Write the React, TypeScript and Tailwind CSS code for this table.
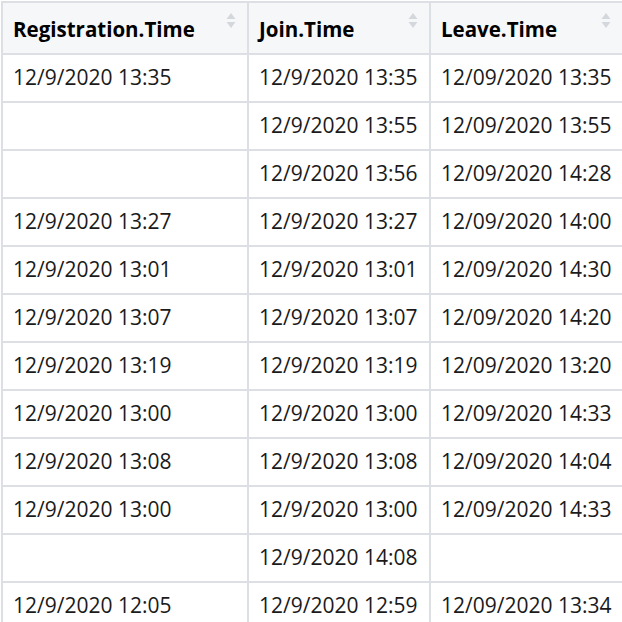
import React from 'react';

type Row = [string, string, string];

const rows: Row[] = [
  ['12/9/2020 13:35', '12/9/2020 13:35', '12/09/2020 13:35'],
  ['', '12/9/2020 13:55', '12/09/2020 13:55'],
  ['', '12/9/2020 13:56', '12/09/2020 14:28'],
  ['12/9/2020 13:27', '12/9/2020 13:27', '12/09/2020 14:00'],
  ['12/9/2020 13:01', '12/9/2020 13:01', '12/09/2020 14:30'],
  ['12/9/2020 13:07', '12/9/2020 13:07', '12/09/2020 14:20'],
  ['12/9/2020 13:19', '12/9/2020 13:19', '12/09/2020 13:20'],
  ['12/9/2020 13:00', '12/9/2020 13:00', '12/09/2020 14:33'],
  ['12/9/2020 13:08', '12/9/2020 13:08', '12/09/2020 14:04'],
  ['12/9/2020 13:00', '12/9/2020 13:00', '12/09/2020 14:33'],
  ['', '12/9/2020 14:08', ''],
  ['12/9/2020 12:05', '12/9/2020 12:59', '12/09/2020 13:34'],
];

const headers = ['Registration.Time', 'Join.Time', 'Leave.Time'];

const SortIcon = () => (
  <svg width="10" height="17" viewBox="0 0 10 17" className="absolute right-[11px] top-[9px]">
    <path d="M5 1 L9.5 7 L0.5 7 Z" fill="#d4d7db" />
    <path d="M5 16 L9.5 10 L0.5 10 Z" fill="#d4d7db" />
  </svg>
);

export default function App() {
  return (
    <div
      className="h-[622px] w-[622px] overflow-hidden bg-white pl-px pt-px text-[#1a1a1a]"
      style={{ fontFamily: '"Open Sans", "Noto Sans", sans-serif' }}
    >
      <table className="w-[621px] table-fixed border-collapse border-2 border-[#dcdfe3]">
        <colgroup>
          <col className="w-[246px]" />
          <col className="w-[182px]" />
          <col className="w-[193px]" />
        </colgroup>
        <thead>
          <tr className="h-[52px] bg-[#f6f7f9]">
            {headers.map((h) => (
              <th
                key={h}
                className="relative border-2 border-[#dcdfe3] pl-[10px] pt-[2px] text-left align-middle text-[20.5px] font-bold text-black"
              >
                {h}
                <SortIcon />
              </th>
            ))}
          </tr>
        </thead>
        <tbody>
          {rows.map((r, i) => (
            <tr key={i} className="h-[48px]">
              {r.map((c, j) => (
                <td
                  key={j}
                  className="border-2 border-[#dcdfe3] pl-[10px] align-middle text-[21px] whitespace-nowrap"
                >
                  {c}
                </td>
              ))}
            </tr>
          ))}
        </tbody>
      </table>
    </div>
  );
}
